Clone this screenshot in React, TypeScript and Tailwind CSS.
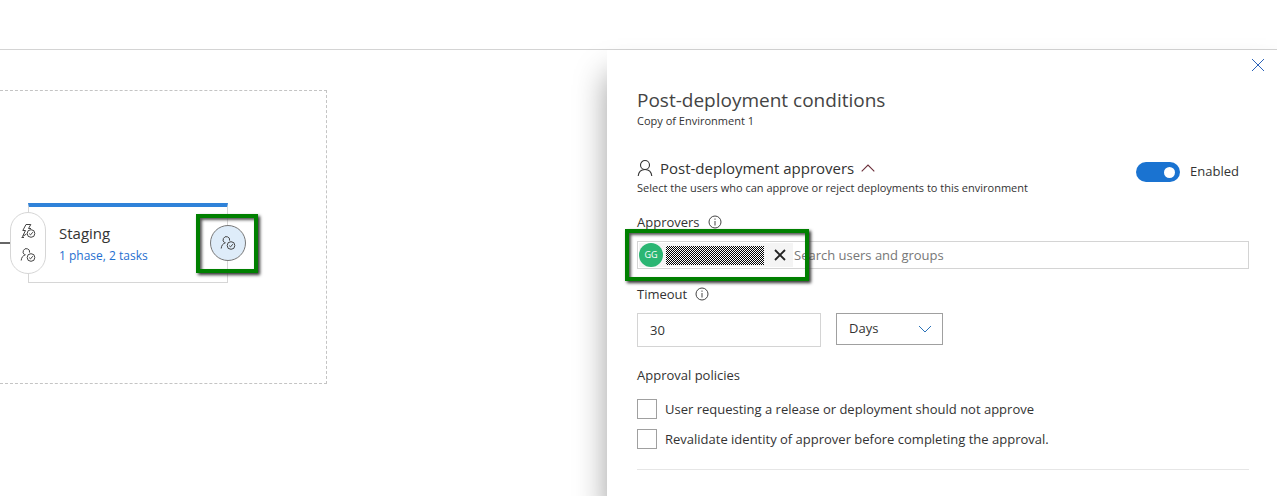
import { useState } from "react";
import type { ReactNode } from "react";

function ApproverIcon() {
  return (
    <svg viewBox="0 0 16 16" className="size-4" fill="none" stroke="#444" strokeWidth="1" aria-hidden="true">
      <path d="M4.600 7.700A3.300 3.300 0 1 1 9.600 5.600" />
      <path d="M1.200 13.500C1.500 10.400 2.800 8.600 5.600 7.700" />
      <circle cx="11" cy="10.500" r="3.800" />
      <path d="M9.200 10.600l1.300 1.300 2.300-2.700" />
    </svg>
  );
}

function TriggerIcon() {
  return (
    <svg viewBox="0 0 16 16" className="size-4" fill="none" stroke="#444" strokeWidth="1" aria-hidden="true">
      <path d="M8.500 5.500L10.800 1.500H6L2.800 7.500H5.500L2.500 13.500l4-2.500" />
      <path d="M1.500 14.500h2.500M8.500 5.500h2.500" />
      <circle cx="11" cy="10.500" r="3.800" />
      <path d="M9.200 10.600l1.300 1.300 2.300-2.700" />
    </svg>
  );
}

function InfoIcon() {
  return (
    <svg viewBox="0 0 14 14" className="size-[14px]" fill="none" stroke="#444" strokeWidth="1" aria-hidden="true">
      <circle cx="7" cy="7" r="6" />
      <path d="M7 6v4.500M7 3.500v1.300" />
    </svg>
  );
}

function Policy({ children }: { children: ReactNode }) {
  return (
    <label className="flex items-center gap-2 text-[13px] leading-5">
      <input
        type="checkbox"
        className="size-5 shrink-0 appearance-none border border-[#a0a0a0] bg-white checked:bg-[#1a73d1]"
      />
      {children}
    </label>
  );
}

function Canvas() {
  return (
    <main className="relative min-w-0 flex-1 overflow-hidden">
      <div className="mt-10 h-[294px] w-[327px] border border-l-0 border-dashed border-[#c4c4c4]" />
      <div className="absolute top-48 left-0 h-0.5 w-3 bg-[#666]" />
      <section className="absolute top-[153px] left-7 h-20 w-[200px] border border-t-4 border-[#d6d6d6] border-t-[#2f82d9] pt-4 pl-[30px]">
        <h2 className="text-[15px] leading-5">Staging</h2>
        <a href="#tasks" className="block text-xs leading-[26px] text-[#1f6fd0]">
          1 phase, 2 tasks
        </a>
      </section>
      <button
        aria-label="Pre-deployment conditions"
        className="absolute top-[162px] left-2.5 flex h-[62px] w-9 flex-col items-center justify-center gap-2 rounded-full border border-[#d6d6d6] bg-white"
      >
        <TriggerIcon />
        <ApproverIcon />
      </button>
      <button
        aria-label="Post-deployment conditions"
        className="absolute top-[175px] left-[210px] flex size-9 items-center justify-center rounded-full border border-[#777] bg-[#deecf9]"
      >
        <ApproverIcon />
      </button>
      <div className="pointer-events-none absolute top-[164px] left-[196px] h-[59px] w-[62px] border-4 border-[#008000] shadow-[2px_2px_3px_#333,inset_2px_2px_3px_#555]" />
    </main>
  );
}

export default function App() {
  const [enabled, setEnabled] = useState(true);
  return (
    <div className="flex min-h-screen flex-col bg-white font-['Open_Sans','Noto_Sans',sans-serif] text-[#333]">
      <header className="h-[50px] border-b border-[#d4d4d4]" />
      <div className="flex flex-1 overflow-x-clip">
        <Canvas />
        <aside className="relative w-[670px] shrink-0 bg-white pr-7 pl-[30px] shadow-[0_24px_30px_rgba(0,0,0,0.38)]">
          <button aria-label="Close" className="absolute top-1.5 right-2.5 p-0.5">
            <svg viewBox="0 0 14 14" className="size-[14px]" fill="none" stroke="#2b62b8" aria-hidden="true">
              <path d="M1 1l12 12M13 1L1 13" />
            </svg>
          </button>

          <h1 className="pt-[38px] text-[19px] leading-6 text-[#444]">Post-deployment conditions</h1>
          <p className="text-[11px] leading-[18px]">Copy of Environment 1</p>

          <div className="mt-7 flex justify-between">
            <div>
              <h2>
                <button className="flex items-center gap-[7px] text-[15px] leading-5">
                  <svg viewBox="0 0 16 18" className="h-[18px] w-4" fill="none" stroke="#333" strokeWidth="1.1" aria-hidden="true">
                    <circle cx="8" cy="6" r="4.500" />
                    <path d="M1.200 17c.4-3.800 2.800-6.500 6.800-6.500s6.400 2.700 6.800 6.500" />
                  </svg>
                  Post-deployment approvers
                  <svg viewBox="0 0 14 8" className="h-2 w-[14px]" fill="none" stroke="#6b2f3a" strokeWidth="1.1" aria-hidden="true">
                    <path d="M.7 7.300L7 1l6.300 6.300" />
                  </svg>
                </button>
              </h2>
              <p className="text-[11px] leading-5">
                Select the users who can approve or reject deployments to this environment
              </p>
            </div>
            <div className="mt-1 mr-2.5 flex h-5 items-center gap-2.5 text-[13px]">
              <button
                role="switch"
                aria-checked={enabled}
                aria-labelledby="switch-state"
                onClick={() => setEnabled(!enabled)}
                className={`flex h-5 w-11 items-center rounded-full px-[5px] ${
                  enabled ? "justify-end bg-[#1a73d1]" : "justify-start bg-[#888]"
                }`}
              >
                <span className="size-[11px] rounded-full bg-white" />
              </button>
              <span id="switch-state">{enabled ? "Enabled" : "Disabled"}</span>
            </div>
          </div>

          <div className="mt-3.5 flex items-center gap-2 text-[13px] leading-5">
            <label htmlFor="approvers">Approvers</label>
            <InfoIcon />
          </div>
          <div className="relative mt-[9px] flex h-7 items-center border border-[#d4d4d4]">
            <span className="ml-px flex h-6 w-[154px] shrink-0 items-center bg-[#f4f4f4]">
              <span className="flex size-6 items-center justify-center rounded-full bg-[#2bb673] text-[9px] text-white">
                GG
              </span>
              <span className="ml-[3px] h-[19px] w-[98px] bg-[repeating-conic-gradient(#000_0_25%,#fff_0_50%)] bg-size-[2px_2px]" />
              <button aria-label="Remove approver" className="ml-[9px] p-px">
                <svg viewBox="0 0 12 12" className="size-3" fill="none" stroke="#222" strokeWidth="1.800" aria-hidden="true">
                  <path d="M1 1l10 10M11 1L1 11" />
                </svg>
              </button>
            </span>
            <input
              id="approvers"
              placeholder="Search users and groups"
              className="min-w-0 flex-1 pl-px text-[13px] leading-5 outline-none placeholder:text-[#777]"
            />
            <div className="pointer-events-none absolute -top-[13px] -left-[13px] h-[52px] w-[184px] border-4 border-[#008000] shadow-[2px_2px_3px_#333,inset_2px_2px_3px_#555]" />
          </div>

          <div className="mt-[15px] flex items-center gap-2 text-[13px] leading-5">
            <label htmlFor="timeout">Timeout</label>
            <InfoIcon />
          </div>
          <div className="mt-[9px] flex items-start gap-[15px] text-[13px]">
            <input id="timeout" defaultValue="30" className="h-[34px] w-[184px] border border-[#d4d4d4] px-3 outline-none" />
            <div className="relative">
              <select
                aria-label="Timeout unit"
                className="h-8 w-[107px] appearance-none border border-[#a0a0a0] bg-white pl-3 outline-none"
              >
                <option>Days</option>
                <option>Hours</option>
                <option>Minutes</option>
              </select>
              <svg
                viewBox="0 0 14 8"
                className="pointer-events-none absolute top-3 right-[11px] h-2 w-[14px]"
                fill="none"
                stroke="#2b72b8"
                aria-hidden="true"
              >
                <path d="M1 1l6 6 6-6" />
              </svg>
            </div>
          </div>

          <h3 className="mt-[18px] text-[13px] leading-5">Approval policies</h3>
          <div className="mt-3.5 flex flex-col gap-2.5 border-b border-[#e6e6e6] pb-5">
            <Policy>User requesting a release or deployment should not approve</Policy>
            <Policy>Revalidate identity of approver before completing the approval.</Policy>
          </div>
        </aside>
      </div>
    </div>
  );
}
